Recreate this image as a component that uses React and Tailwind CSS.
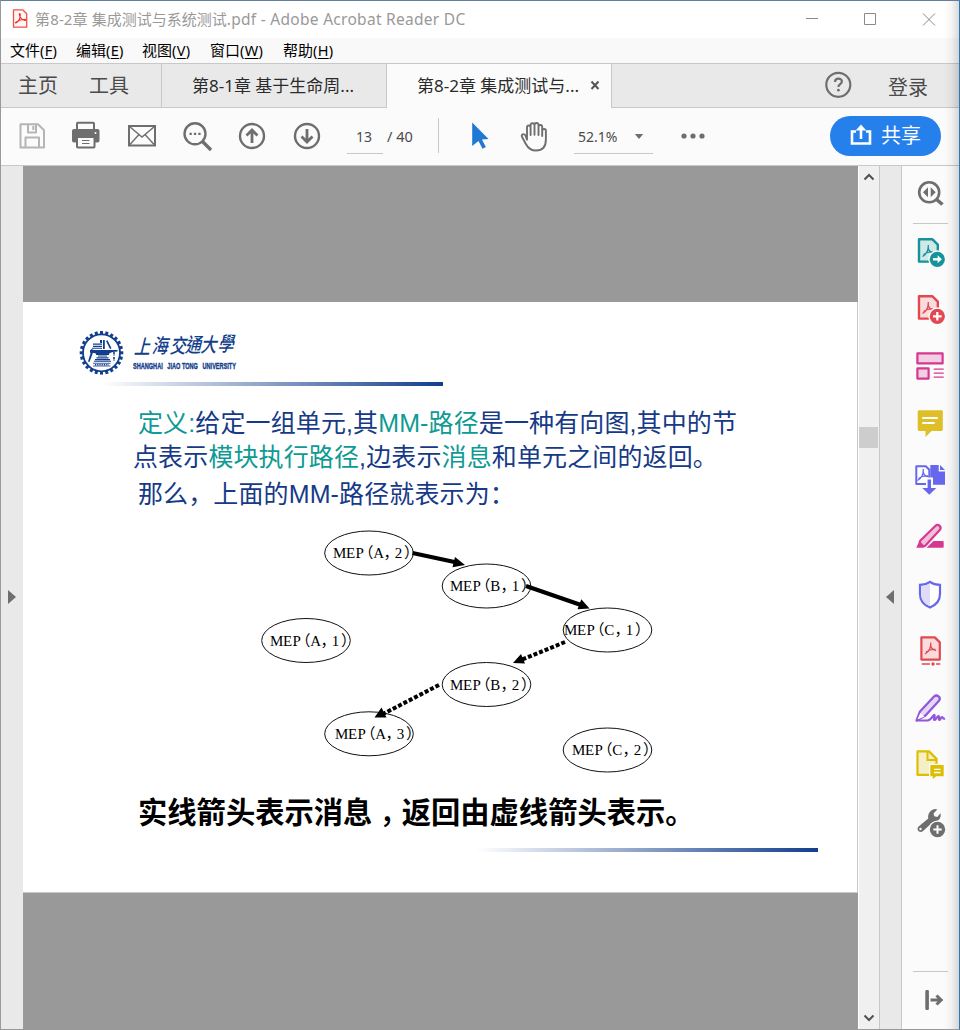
import React from "react";

const UI = "font-['Noto_Sans','Noto_Sans_CJK_SC',sans-serif]";

function Icon({ box, className, children }) {
  const [, , w, h] = box.split(" ");
  return (
    <svg viewBox={box} width={w} height={h} className={`shrink-0 ${className || ""}`} fill="none">
      {children}
    </svg>
  );
}

function TitleBar() {
  return (
    <header className="flex h-[37px] shrink-0 items-center bg-white pl-2.5 text-[15px] text-[#999]">
      <Icon box="0 0 18 22" className="-mt-px">
        <path d="M2.5 1.8h9.2l4 4v13.4H2.5z" fill="#fff5f4" stroke="#f0504a" strokeWidth="1.3" strokeLinejoin="round" />
        <path d="M4.8 15c2.8-1.6 4.6-5 4.5-8.6 0-1.2-1.3-1-1 0 .6 3 2.800 5.400 5.500 6 1.300.1 1-1.300-.2-1.200-3 0-5.800.9-8.300 2.700-.9.700-1 1.200-.5 1.100z" stroke="#f0302a" strokeWidth="1.1" />
      </Icon>
      <span className="ml-[6px] whitespace-pre">
        <span className="tracking-[0.15px]">第8-2章 </span>集成测试与系统测试
        <span className="text-[15.5px] tracking-[0.28px]">.pdf - Adobe Acrobat Reader DC</span>
      </span>
      <Icon box="800 8 140 22" className="-mt-0.5 ml-auto mr-[19px]">
        <path d="M806 18.500h12M864.500 13.500h11v11h-11zM923 13.500l12 12M935 13.500l-12 12" stroke="#8a8a8a" />
      </Icon>
    </header>
  );
}

const menus = [
  ["文件", "F", "w-[66px]"],
  ["编辑", "E", "w-[66px]"],
  ["视图", "V", "w-[68px]"],
  ["窗口", "W", "w-[73px]"],
  ["帮助", "H", "w-[66px]"],
];

function MenuBar() {
  return (
    <nav className="flex h-[26px] shrink-0 items-center border-b border-[#c8c8c8] bg-[#f9f9f9] pl-[9px] text-[15px] text-black">
      {menus.map(([label, key, w]) => (
        <span key={key} className={`${w} whitespace-nowrap`}>
          {label}
          <span className="text-[14.5px] tracking-[0.3px]">(<u className="underline-offset-2">{key}</u>)</span>
        </span>
      ))}
    </nav>
  );
}

function TabBar() {
  return (
    <div className="flex h-[44px] shrink-0 bg-[#e9e9e9] text-[17px] text-[#2b2b2b]">
      <div className="flex w-[161px] items-center border-b border-r border-[#c8c8c8] pl-[17px] text-[20px] text-[#4b4b4b]">
        <span className="w-[71px]">主页</span>
        <span>工具</span>
      </div>
      <div className="flex w-[225px] items-center whitespace-nowrap border-b border-r border-[#c8c8c8] pl-[30px]">
        第8-1章 基于生命周...
      </div>
      <div className="flex w-[225px] items-center whitespace-nowrap border-r border-[#c8c8c8] bg-[#fbfbfb] pl-[30px]">
        <span className="w-[171px]">第8-2章 集成测试与...</span>
        <Icon box="588 78 14 14" className="-mt-0.5">
          <path d="M591.500 81.500l7 7.500M598.500 81.500l-7 7.500" stroke="#555" strokeWidth="2" />
        </Icon>
      </div>
      <div className="flex flex-1 items-center border-b border-[#c8c8c8] pl-[211px] text-[20px] text-[#4b4b4b]">
        <Icon box="823 70 31 31">
          <circle cx="838.300" cy="84.800" r="12" stroke="#6e6e6e" strokeWidth="2.200" />
          <path d="M835 82c0-4.600 6.900-4.400 6.900-.5 0 2.700-3.500 2.600-3.500 5.500" stroke="#6e6e6e" strokeWidth="2.200" />
          <circle cx="838.400" cy="90.200" r="1.400" fill="#6e6e6e" />
        </Icon>
        <span className="ml-[34px] pt-1">登录</span>
      </div>
    </div>
  );
}

function Toolbar() {
  return (
    <div className="flex h-[58px] shrink-0 items-center border-b border-[#c8c8c8] bg-[#fbfbfb] pb-0.5 pl-[13px] text-[14px] text-[#4b4b4b]">
      <Icon box="14 118 36 36">
        <path d="M20.500 124.300h17.500l6 6v17.200h-23.500zM25.500 147v-9.500h13.500V147M28 124.500v8h8v-8M33.300 126v4" stroke="#b5b5b5" strokeWidth="2" strokeLinejoin="round" />
      </Icon>
      <Icon box="68 118 36 36" className="ml-[18px]">
        <path d="M77 130v-6.500q0-.8.8-.8h15.400q.8 0 .8.800v6.500" stroke="#6e6e6e" strokeWidth="2" />
        <rect x="72" y="129" width="27.500" height="13.500" rx="2" fill="#6e6e6e" />
        <rect x="77" y="137" width="17.500" height="10.500" rx=".8" fill="#fbfbfb" stroke="#6e6e6e" strokeWidth="2" />
        <path d="M82 140.500h7.500M82 143.500h7.500" stroke="#6e6e6e" strokeWidth="1.200" />
        <circle cx="95.500" cy="133" r="1" fill="#fbfbfb" />
      </Icon>
      <Icon box="124 118 36 36" className="ml-[20px]">
        <path d="M129 126h26v19.500h-26z" stroke="#6e6e6e" strokeWidth="2" />
        <path d="M129.500 126.500l12.500 10.500 12.500-10.500M129.500 145l9.500-10.500M154.500 145l-9.500-10.500" stroke="#6e6e6e" strokeWidth="1.400" />
      </Icon>
      <Icon box="180 118 36 36" className="ml-[20px]">
        <circle cx="195" cy="133.800" r="10.500" stroke="#6e6e6e" strokeWidth="2.400" />
        <path d="M202.500 141.500l8.500 8.500" stroke="#6e6e6e" strokeWidth="3.400" />
        <path d="M189.500 133.800h2.300M193.900 133.800h2.300M198.300 133.800h2.300" stroke="#6e6e6e" strokeWidth="2.300" />
      </Icon>
      <Icon box="234 118 36 36" className="ml-[18px]">
        <circle cx="252" cy="136" r="12" stroke="#6e6e6e" strokeWidth="2.400" />
        <path d="M252 143v-12.500M246.500 135.500l5.500-5.500 5.500 5.500" stroke="#6e6e6e" strokeWidth="2.800" />
      </Icon>
      <Icon box="289 118 36 36" className="ml-[19px]">
        <circle cx="307" cy="136" r="12" stroke="#6e6e6e" strokeWidth="2.400" />
        <path d="M307 129v12.500M301.500 136.500l5.500 5.500 5.500-5.500" stroke="#6e6e6e" strokeWidth="2.800" />
      </Icon>
      <div className="ml-[22px] mt-0.5 h-[34px] w-9 border-b border-[#c8c8c8] pr-0.5 pt-1.5 text-center">13</div>
      <div className="ml-1 mt-0.5 h-[34px] w-[51px] pt-1.5 text-[14.500px]">/ 40</div>
      <div className="h-[35px] w-px bg-[#c8c8c8]" />
      <Icon box="463 118 36 36" className="ml-6">
        <path d="M472.200 122.500l16.300 16.500-6.600.6 4 7.400-3.400 1.800-4-7.800-6.300 5z" fill="#1f78d1" />
      </Icon>
      <Icon box="516 118 36 36" className="ml-[17px]">
        <path d="M526.500 139.500v-12.300c0-2.600 3.600-2.600 3.600 0v7.600-9.800c0-2.700 3.900-2.700 3.900 0v9.600-9.800c0-2.700 4-2.700 4 0v10-8c0-2.600 3.700-2.600 3.700 0v9-5.200c0-2.500 3.700-2.500 3.700 0v8.400c0 7.500-3.900 11.300-9.900 11.300-5.500 0-8-2.600-10-6.300l-3.800-7c-1.400-2.700 1.600-4.200 3.200-1.900z" transform="translate(.5 .2)" stroke="#6e6e6e" strokeWidth="1.900" strokeLinejoin="round" />
      </Icon>
      <div className="ml-[22px] mt-0.5 flex h-[34px] w-[79px] border-b border-[#c8c8c8] pl-1 pt-1.5">
        <span className="w-[56px]">52.1%</span>
        <Icon box="0 0 10 20">
          <path d="M.8 8h8.400l-4.200 5z" fill="#6e6e6e" />
        </Icon>
      </div>
      <Icon box="680 126 26 20" className="ml-[27px]">
        <circle cx="684" cy="136" r="2.600" fill="#6e6e6e" />
        <circle cx="693" cy="136" r="2.600" fill="#6e6e6e" />
        <circle cx="702" cy="136" r="2.600" fill="#6e6e6e" />
      </Icon>
      <button className="ml-[124px] flex h-10 w-[111px] items-center rounded-full bg-[#2680eb] pl-[18px] text-[20px] text-white">
        <Icon box="848 122 26 28">
          <path d="M856 131.500h-4v12h18v-12h-4M861 139v-11" stroke="#fff" strokeWidth="2.600" />
          <path d="M855.700 130.500l5.300-6 5.300 6z" fill="#fff" />
        </Icon>
        <span className="ml-[7px]">共享</span>
      </button>
    </div>
  );
}

const teeth = Array.from({ length: 24 }, (_, i) => (i * 360) / 24);

function UniversityLogo() {
  return (
    <svg viewBox="78 328 250 50" width="250" height="50" className="ml-[55px] shrink-0">
      <g stroke="#123e8c" fill="none">
        {teeth.map((a) => (
          <path key={a} d="M101.500 331v3.500" strokeWidth="3" transform={`rotate(${a} 101.500 352.800)`} />
        ))}
        <circle cx="101.500" cy="352.800" r="18.500" strokeWidth="1.800" />
      </g>
      <g fill="#123e8c">
        <path d="M93 343.500h9v1.300h-9zM93 345.700h9v1.200h-9zM92 347.700h10v1.100H92zM103 340h1.800v9H103zM100 340h2v3h-2zM106 341l1.500-.8 4 8-1.500.8z" />
        <path d="M90 350h27.500v1.400c-3.500 0-6.500.8-8.500 2.300v1.300H96v-1.300c-1-.6-3-1-6-1z" />
        <path d="M98 355.500h9v1h-9zM96.500 357.200h12v1.200h-12zM95 359h15v1.200H95zM94 360.800h17v1H94z" />
        <path d="M91 349l3 1-4.500 12-1.500-.5 2.500-8z" />
      </g>
      <path d="M93 363.300h17.500M93 366h17.500" stroke="#123e8c" strokeWidth=".8" />
      <path d="M95 364.700h13.500" stroke="#123e8c" strokeWidth="1.600" strokeDasharray="1 .8" />
      <path d="M114 352v4M114 357v4" stroke="#123e8c" strokeWidth="1.600" strokeDasharray="2.500 1" />
      <text
        x="0 17.500 35.500 50.500 66 83"
        y="1 0 0 -1 -1 -2"
        transform="translate(134 353) skewX(-14) scale(1 1.250)"
        fill="#123e8c"
        className="font-['Noto_Sans_CJK_TC',sans-serif] text-[16px] font-medium"
      >
        上海交通大學
      </text>
      <text x="133" y="369" fill="#123e8c" stroke="#123e8c" strokeWidth=".4" className="font-['Liberation_Sans',sans-serif] text-[9.500px] font-bold" textLength="103" lengthAdjust="spacingAndGlyphs">
        {"SHANGHAI\u00a0\u00a0 JIAO TONG\u00a0\u00a0 UNIVERSITY"}
      </text>
    </svg>
  );
}

const nodes = [
  { cx: 369, cy: 553, name: "A", n: 2, tx: 333 },
  { cx: 486.500, cy: 586, name: "B", n: 1, tx: 450 },
  { cx: 607.500, cy: 630, name: "C", n: 1, tx: 564 },
  { cx: 306, cy: 640.500, name: "A", n: 1, tx: 270 },
  { cx: 486.500, cy: 684.500, name: "B", n: 2, tx: 450 },
  { cx: 369, cy: 733.800, name: "A", n: 3, tx: 335 },
  { cx: 607.500, cy: 750, name: "C", n: 2, tx: 572 },
];
const advances = [0, 13, 22.500, 25.500, 40.300, 50.500, 61.700, 71];

function Diagram() {
  return (
    <svg viewBox="253 525 410 255" width="410" height="255" className="ml-[230px]">
      {nodes.map((d) => (
        <g key={d.name + d.n}>
          <ellipse cx={d.cx} cy={d.cy} rx="44.300" ry="22" fill="#fff" stroke="#111" />
          <text
            x={advances.map((a) => d.tx + a).join(" ")}
            y={Math.round(d.cy) + 5}
            className="font-['Liberation_Serif','Noto_Sans_CJK_SC',serif] text-[15px]"
          >
            {`MEP（${d.name}，${d.n}）`}
          </text>
        </g>
      ))}
      <g stroke="#000" strokeWidth="4">
        <path d="M412.500 553l42 9M526 586l55 19" />
        <path d="M565 642l-44 18M439 685l-56 29" strokeDasharray="4 2" />
      </g>
      <path d="M465 565l-12.500 2.300 2.500-10.300zM589.500 608.500l-12 .8 3.800-10zM513 663l8-9 4 9.500zM374.500 717.500l7-10 5 10z" />
    </svg>
  );
}

function Slide() {
  return (
    <article className="flex h-[591px] w-[835px] flex-col border-b border-r border-[#c6cac6] bg-white pt-[26px]">
      <UniversityLogo />
      <div className="ml-[77px] mt-1 h-1 w-[343px] shrink-0 bg-linear-to-r/srgb from-white to-[#123e8c]" />
      <div className="mt-5 whitespace-nowrap pl-[115px] font-['Liberation_Sans','Noto_Sans_CJK_SC',sans-serif] text-[25px] leading-[34px] tracking-[0.12px] text-[#163a87]">
        <p>
          <span className="text-[#0f9a94]">定义:</span>给定一组单元,其<span className="text-[#0f9a94]">MM-路径</span>是一种有向图,其中的节
        </p>
        <p className="-ml-[5px]">
          点表示<span className="text-[#0f9a94]">模块执行路径</span>,边表示<span className="text-[#0f9a94]">消息</span>和单元之间的返回。
        </p>
        <p className="mt-[3px]">那么，上面的MM-路径就表示为：</p>
      </div>
      <div className="mt-[14px] h-[255px] shrink-0">
        <Diagram />
      </div>
      <p className="mt-2 whitespace-nowrap pl-[115px] font-['Noto_Sans_CJK_SC',sans-serif] text-[29.300px] font-bold leading-[44px] text-black">
        实线箭头表示消息<span className="relative top-[9px] inline-block font-['Noto_Sans_CJK_TC',sans-serif] font-medium leading-none">，</span>返回由虚线箭头表示。
      </p>
      <div className="ml-[453px] mt-4 h-1 w-[342px] shrink-0 bg-linear-to-r/srgb from-white to-[#123e8c]" />
    </article>
  );
}

function PdfMark({ color, x = 0, y = 0 }) {
  return (
    <path
      transform={`translate(${x} ${y})`}
      d="M10.500 22.500c3.500-2 6-6 5.800-11.500M16.200 13c0 3.500 2.500 5.500 5.500 6M11.500 20.500c2.500-1.800 6-2.700 9.500-2.500"
      stroke={color}
      strokeWidth="1.300"
    />
  );
}

function DocBadge({ color, fill, children }) {
  return (
    <Icon box="0 0 36 36">
      <path d="M7 5.300h13.500l5.300 5.300v17H7z" fill={fill} stroke={color} strokeWidth="2.400" strokeLinejoin="round" />
      <PdfMark color={color} />
      <circle cx="25.300" cy="25.300" r="9" fill="#fbfbfb" />
      <circle cx="25.300" cy="25.300" r="7.600" fill={color} />
      {children}
    </Icon>
  );
}

function ToolIcons() {
  const icons = [
    <DocBadge color="#16939a" fill="#d0e8e8">
      <path d="M21 25.300h6" stroke="#fff" strokeWidth="2.400" />
      <path d="M25.600 21.300l4.300 4-4.300 4z" fill="#fff" />
    </DocBadge>,
    <DocBadge color="#e34850" fill="#f8dcdd">
      <path d="M21 25.300h8.600M25.300 21v8.600" stroke="#fff" strokeWidth="2.200" />
    </DocBadge>,
    <Icon box="0 0 36 36">
      <path d="M5.400 5.400h25.200v10H5.400zM5.400 20.400h11.200v10.200H5.400z" fill="#f3cfe3" stroke="#d83790" strokeWidth="2.200" strokeLinejoin="round" />
      <path d="M21.700 21.200h10M21.700 25.200h10M21.700 29.200h10" stroke="#d83790" strokeWidth="1.300" />
    </Icon>,
    <Icon box="0 0 36 36">
      <path d="M7 5.300h22.500q1.300 0 1.300 1.300v18q0 1.300-1.300 1.300H19.500l-6 6v-6H7q-1.300 0-1.300-1.300v-18q0-1.300 1.300-1.300z" fill="#dfbf28" />
      <path d="M10.300 13h15.400M10.300 18h12.400" stroke="#fff" strokeWidth="1.900" />
    </Icon>,
    <Icon box="0 0 36 36">
      <path d="M18.300 3h8.400v6.500H33v13.200H18.300z" fill="#6767ec" />
      <path d="M28 3l5 5h-5z" fill="#6767ec" />
      <path d="M4.300 4.300h9.500l3.500 3.500V22h-13z" fill="#fff" stroke="#6767ec" strokeWidth="2" strokeLinejoin="round" />
      <PdfMark color="#6767ec" x={-5} y={-4} />
      <path d="M14 15.500h7V25h5l-8.700 8-8-8H14z" fill="#fbfbfb" />
      <path d="M17.300 17.500v10" stroke="#6767ec" strokeWidth="3.400" />
      <path d="M10.300 26h14l-7 6.800z" fill="#6767ec" />
    </Icon>,
    <Icon box="0 0 36 36">
      <path d="M4.300 28.800l2.500-5.500 5.500 5.500z" fill="#d83790" />
      <path d="M8.200 21.800L23.300 7c3-2.600 7 .8 4.400 4L13.500 26.500q-1.500 1.300-3.200-.2l-2-2q-1.200-1.300-.1-2.500z" fill="#f0c0da" stroke="#d83790" strokeWidth="2.200" />
      <path d="M14.500 28.800l7-6.800h9.200q1 0 1 1v4.800q0 1-1 1z" fill="#d83790" />
    </Icon>,
    <Icon box="0 0 36 36">
      <path d="M18 5.800c3 2.200 6.500 3 10 3V18c0 6.500-4 11-10 13.500C12 29 8 24.500 8 18V8.800c3.500 0 7-.8 10-3z" fill="#fff" stroke="#6767ec" strokeWidth="2.200" />
      <path d="M18 7.200v23c-5.500-2.300-8.800-6.300-8.800-12V9.900c3-.1 6.200-1 8.800-2.700z" fill="#dedcf8" />
    </Icon>,
    <Icon box="0 0 36 36">
      <path d="M9.400 4.400h13.400l5 5v17.200H9.400z" fill="#f8dcdd" stroke="#e34850" strokeWidth="2.200" strokeLinejoin="round" />
      <PdfMark color="#e34850" x={2.500} y={-1.500} />
      <path d="M9.700 31h8.300M24 31h4.300" stroke="#e34850" strokeWidth="1.500" />
      <circle cx="21" cy="31" r="1.700" fill="#e34850" />
    </Icon>,
    <Icon box="0 0 36 36">
      <path d="M4.500 30.500l3.500-9L22 6.500c3-2.600 7.500 1 5 4.300L13.500 25.500z" fill="#e4d8f6" stroke="#9256d9" strokeWidth="2.200" strokeLinejoin="round" />
      <path d="M5.500 29.500l2.800-6.500 4.200 3.500z" fill="#fff" />
      <path d="M4.500 30.500h11c4 0 6-6.500 7-5.500s-1.500 4.500 0 5 2.500-4.500 4-4-.5 4 1 4 1-3 2.500-3 .5 2.500 3 1.500" stroke="#9256d9" strokeWidth="2.200" strokeLinejoin="round" />
    </Icon>,
    <Icon box="0 0 36 36">
      <path d="M5.500 4.400h11.500l7.500 7.500v16H5.500z" fill="#f5efc8" stroke="#dcbf00" strokeWidth="2.200" strokeLinejoin="round" />
      <path d="M15.500 4.500v8.500h8.500" stroke="#dcbf00" strokeWidth="2" />
      <path d="M17 16.800h16v14.500H17z" fill="#fbfbfb" />
      <path d="M18.300 18h13.400v11.300h-7.500l-3.400 3v-3h-2.500z" fill="#dcbf00" />
      <path d="M22 22.300h6.500M22 25.500h6.500" stroke="#fff" strokeWidth="1.300" />
    </Icon>,
    <Icon box="0 0 36 36">
      <path d="M6.300 22.700l10-8.200c-1-5 2.700-9.500 7.500-9.500l1.500.4-3.800 4 .8 2.800 2.900.7 3.400-3.600c1 5.200-3 9.200-7.600 8.700L10.800 27.200c-3.300 2.300-6.800-1.600-4.500-4.500z" fill="#6e6e6e" />
      <circle cx="8.500" cy="25" r="1.200" fill="#fff" />
      <circle cx="25.500" cy="25.500" r="9" fill="#fbfbfb" />
      <circle cx="25.500" cy="25.500" r="7.700" fill="#6e6e6e" />
      <path d="M21.300 25.500h8.400M25.500 21.300v8.400" stroke="#fff" strokeWidth="2" />
    </Icon>,
  ];
  return icons.map((icon, i) => (
    <div key={i} className="flex h-[57px] shrink-0 items-center">{icon}</div>
  ));
}

function ToolPane() {
  return (
    <aside className="flex w-[57px] shrink-0 flex-col items-start bg-[#fbfbfb] pl-[10px]">
      <div className="ml-px flex h-[58px] w-[35px] shrink-0 items-start justify-center border-b border-[#c8c8c8] pr-0.5 pt-[9px]">
        <Icon box="0 0 36 36">
          <circle cx="17.200" cy="17.300" r="10" stroke="#6e6e6e" strokeWidth="2.600" />
          <path d="M24 24l6.500 5.500" stroke="#6e6e6e" strokeWidth="3.600" />
          <path d="M16 12.300v10l-5-5zM18.700 12.300v10l5-5z" fill="#6e6e6e" />
        </Icon>
      </div>
      <div className="-mt-px flex flex-col">
        <ToolIcons />
      </div>
      <div className="ml-px mt-auto flex h-[58px] w-[35px] shrink-0 items-start justify-center border-t border-[#c8c8c8] pr-0.5 pt-[10px]">
        <Icon box="0 0 36 36">
          <rect x="13.300" y="8" width="3.600" height="20" rx="1" fill="#6e6e6e" />
          <path d="M18.500 18h10M24.500 13.500l4.700 4.500-4.700 4.500" stroke="#6e6e6e" strokeWidth="3" />
        </Icon>
      </div>
    </aside>
  );
}

export default function App() {
  return (
    <div className={`relative flex h-[1030px] w-[960px] flex-col overflow-hidden border-b border-l border-r border-t border-b-[#999] border-l-[#999] border-r-[#2a7ab8] border-t-[#5f7f9c] bg-[#fbfbfb] ${UI}`}>
      <TitleBar />
      <MenuBar />
      <TabBar />
      <Toolbar />
      <main className="flex min-h-0 flex-1">
        <div className="flex w-[22px] shrink-0 items-center bg-[#e9e9e9] pb-0.5 pl-[7px]">
          <Icon box="0 0 8 14">
            <path d="M0 0l8 7-8 7z" fill="#6e6e6e" />
          </Icon>
        </div>
        <section className="w-[835px] shrink-0 bg-[#999] pt-[136px]">
          <Slide />
        </section>
        <div className="flex w-[22px] shrink-0 flex-col items-center border-l border-r border-l-white border-r-[#c8c8c8] bg-[#f0f0f0] py-[6px]">
          <Icon box="0 0 12 10">
            <path d="M1.500 7.500L6 3l4.500 4.500" stroke="#505050" strokeWidth="2" />
          </Icon>
          <div className="-ml-px mt-[245px] h-[21px] w-[19px] bg-[#cdcdcd]" />
          <Icon box="0 0 12 10" className="mt-auto">
            <path d="M1.500 2.500L6 7l4.500-4.500" stroke="#505050" strokeWidth="2" />
          </Icon>
        </div>
        <div className="flex w-[22px] shrink-0 items-center border-r border-[#c8c8c8] bg-[#e9e9e9] pb-0.5 pl-[6px]">
          <Icon box="0 0 8 14">
            <path d="M8 0L0 7l8 7z" fill="#6e6e6e" />
          </Icon>
        </div>
        <ToolPane />
      </main>
      <div className="pointer-events-none absolute inset-y-0 right-0 w-[15px] bg-linear-to-r/srgb from-transparent via-black/4 to-black/15" />
    </div>
  );
}
